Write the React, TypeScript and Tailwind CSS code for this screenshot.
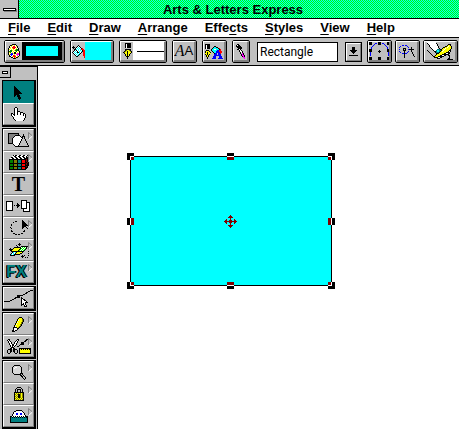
import React, { useState } from 'react';

const COLORS: Record<string, string> = {
  K: '#000000',
  W: '#ffffff',
  G: '#808080',
  S: '#c0c0c0',
  Y: '#ffff00',
  O: '#808000',
  R: '#ff0000',
  D: '#800000',
  B: '#0000ff',
  N: '#008000',
  L: '#00ff00',
  C: '#00ffff',
  T: '#008080',
  M: '#ff00ff',
  P: '#800080',
};

// small bitmap icons, one letter per pixel
function Bitmap({ rows }: { rows: string[] }) {
  const width = Math.max(...rows.map(r => r.length));
  return (
    <svg width={width} height={rows.length} viewBox={`0 0 ${width} ${rows.length}`} shapeRendering="crispEdges" className="shrink-0" aria-hidden="true">
      {rows.map((row, y) =>
        row.split('').map((c, x) => (COLORS[c] ? <rect key={`${x}-${y}`} x={x} y={y} width={1} height={1} fill={COLORS[c]} /> : null))
      )}
    </svg>
  );
}

const paletteRows = [
  '....KKKK....',
  '..KKYWYWK...',
  '.KWYWRRWYK..',
  '.KYWRRRRWK..',
  'KWYWYRRWYWK.',
  'KYWYWYWYNNK.',
  'KWNNYWYNNNK.',
  'KNNNWYWYNWYK',
  'KYNWYWKKWYWK',
  'KWYBBYKKYMMK',
  'KYBBBWYWMMMK',
  '.KWBWRRYWMWK',
  '.KKWYRRRWYK.',
  '...KKWRYKK..',
  '.....KKK....',
];

const bucketRows = [
  '......K......',
  '.K...KWK.....',
  'KKK.KWCWK....',
  '.K.KWCWCWKR..',
  '..KKCWCWCRRR.',
  '..KWKWCWCWKRR',
  '.KWCWKWCWCKRR',
  'KWCWCKKCWK.RR',
  '.KWCWCWCK..RR',
  '..KWCWCK...RR',
  '...KWCK....RR',
  '....KK......R',
  '............R',
];

const nibRows = [
  '..KKKKKK.',
  '..KWKKKK.',
  '..KWKKKK.',
  '..KWKKKK.',
  '..KWKKKK.',
  '..SSSSSS.',
  '..KKKKKK.',
  '..KOYYOK.',
  '.KOYKYYOK',
  'KOYYKYYYK',
  '.KYYKYYK.',
  '..KYKYK..',
  '..KYKYK..',
  '...KKK...',
  '....K....',
  '....K....',
];

const penFillRows = [
  'KKKKK.............',
  'KWKKK.............',
  'KWKKK....KK.......',
  'KWKKK...KCCKK.....',
  'KWKKK..KCCCCCKR...',
  '.SSS..KCCWWCCCKR..',
  '.KKK..KCCCCCBBRR..',
  'KYYYK..KCCCBBBRRR.',
  'KYKYYK..KCCBBBBRR.',
  'YYKYYY...KBB.BBR..',
  'KYKYK....BBB.BBB..',
  '.KYK.....BBBBBBB..',
  '.KYK....BBB...BBB.',
  '..K.....BBB...BBB.',
  '..K....BBBB..BBBBB',
];

const dropperRows = [
  '.KK.......',
  'KWKK......',
  'KKKKK.....',
  '.KKKKK....',
  '..KKKK....',
  '.KKWK.....',
  '...KWK....',
  '...KWWK...',
  '....KWK...',
  '....KSMK..',
  '.....KMK..',
  '.....KMMK.',
  '......KMK.',
  '.......MM.',
  '........M.',
];

const downRows = [
  '...KKK...',
  '...KKK...',
  '...KKK...',
  '.KKKKKKK.',
  '..KKKKK..',
  '...KKK...',
  '....K....',
  '.........',
  'KKKKKKKKK',
];

const arrowRows = [
  'K.........',
  'KK........',
  'KKK.......',
  'KKKK......',
  'KKKKK.....',
  'KKKKKK....',
  'KKKKKKK...',
  'KKKKKKKK..',
  'KKKKK.....',
  'KK.KKK....',
  'K..KKK....',
  '....KKK...',
  '....KKK...',
  '.....K....',
];

const handRows = [
  '....KK.........',
  '...KWWK........',
  '...KWWK........',
  '...KWWK........',
  '...KWWKKK......',
  '...KWWKWWKKK...',
  'KK.KWWKWWKWWKK.',
  'KWKKWWKWWKWWKWK',
  'KWWKWWWWWWWWKWK',
  '.KWWWWWWWWWWWWK',
  '..KWWWWWWWWWWWK',
  '..KWWWWWWWWWWK.',
  '...KWWWWWWWWWK.',
  '....KWWWWWWWK..',
];

const cellsRows = [
  '....KWKKWWKKWWKKWWKK',
  '...WWKKWWKKWWKKWWKSK',
  '..KKWWKKWWKKWWKKWKKK',
  '.WWKKWWKKWWKKWWKKKKK',
  'KKKKKKKKKKKKKKKKKDKK',
  'KNNNKOOOKTTTKRRRKDKK',
  'KNNNKOOOKTTTKRRRKDKK',
  'KNNNKOOOKTTTKRRRKKDK',
  'KKKKKKKKKKKKKKKKKDKK',
  'KNNNKOOOKTTTKRRRKDKK',
  'KNNNKOOOKTTTKRRRKKKK',
  'KKKKKKKKKKKKKKKKKDK.',
  'KNNNKOOOKTTTKRRRKKK.',
  'KNNNKOOOKTTTKRRRKK..',
  'KKKKKKKKKKKKKKKKK...',
];

const scissorRows = [
  '.KK.......KK.......KK...',
  'KWK......KWK......KK....',
  '.KWK....KWK......KK.....',
  '.KWWK..KWWK...KKK.......',
  '..KWK..KWK....KKK.......',
  '..KWWKKWWK...KKKK.......',
  '...KWKKWK...K...........',
  '...KWKWK..KK............',
  '....KKK.................',
  '...KKWKK....KKKKKKKKKKKK',
  '.KKKK.KKKK..KYKYKYKYKYKK',
  'K..KK.KK..K.KYYYYYYYYYYK',
  'K..KK.KK..K.KYYYYYYYYYYK',
  'K..K...K..K.KYYYYYYYYYYK',
  '.KK.....KK..KKKKKKKKKKKK',
];

const pencilRows = [
  '.......KKK...',
  '......KYYYK..',
  '.....KYYYYOK.',
  '.....KWYYYOK.',
  '....KYYYYYOK.',
  '....KWYYYOK..',
  '...KYYYYYOK..',
  '...KWYYYOK...',
  '..KYYYYYOK...',
  '..KWYYYOK....',
  '.KKKKYOK.....',
  '.KWWWKK......',
  '.KWWWK.......',
  'KKWKK........',
  'KKK..........',
];

const lockRows = [
  '...KKKK...',
  '..KSSSSK..',
  '.KSKKKKSK.',
  '.KSK..KSK.',
  '.KSK..KSK.',
  'KKKKKKKKKK',
  'KYOYOYOYOK',
  'KOYOKKOYOK',
  'KYOYKKOYOK',
  'KOYOKKOYOK',
  'KYOYKKOYOK',
  'KOYOYOYOYK',
  'KYOYOYOYOK',
  'KKKKKKKKKK',
];

const maskRows = [
  '......KKKKKK......',
  '....KKWWWWWWK.....',
  '...KWWWWWWWWWK....',
  '...KWWBBWWBBWWK...',
  '..KWWWBBWWBBWWK...',
  '..KWWWWWWWWWWWWK..',
  'KKWKWKWKWKWKWKWKKK',
  'KTKTKTKTKTKTKTKTKK',
  'KTTTTTTTTTTTTTTTTK',
  'KTTTTTTTTTTTTTTTTK',
  'KTTTTTTTTTTTTTTTTK',
  'KTTTTTTTTTTTTTTTTK',
  'KKKKKKKKKKKKKKKKKK',
];

const warpRows = [
  '..........K.........',
  '.........KKK........',
  '.......K..K.........',
  '........K...KKKKKKK.',
  '.....KKKKKKKWLWLWK..',
  '.K..KYYYYYYKLWLWLK..',
  'KKKKYYYYYYKLWLWLK..K',
  '.KKYYYYYYKLWLWLK....',
  '..KKKKKKKKKKKKK....K',
  '...KCWCKYYYYYK......',
  '..KWCWKYYYYKK......K',
  '.KCWCKKKKKK.........',
  '.KKKKK.......K.K...K',
  '............KKK.....',
  '.............K..K.K.',
];

const nodeEditRows = [
  'KKK......KKK......KKK',
  'KKK...BB.KKK.BB...KKK',
  'KKK..B...KKK...B..KKK',
  '....B...........B....',
  '...B.............B...',
  '..B...............B..',
  '..B...............B..',
  'KKK...............KKK',
  'KKK.......K.......KKK',
  'KKK......KKK......KKK',
  '.B........K........B.',
  '.B.................B.',
  '.B.................B.',
  '.B.................B.',
  '.....................',
  'KKK......KKK......KKK',
  'KKK......KKK......KKK',
  'KKK......KKK......KKK',
];

const snapRows = [
  '...BB.BB........',
  '.B......B.......',
  'B........B..K...',
  '....KKK.....K...',
  'B...K.K..BKKKKK.',
  '....KKK.....K...',
  'B....K...B..K...',
  '.B...K..B....K..',
  '...BBKBB.....K..',
  '.....K........K.',
  '.....K........K.',
  '.....K.........K',
  '.....K..........',
];

const drawHandRows = [
  'WWWWWWWWWS.................',
  'KWWWWWWWWK.................',
  '.KWWWWWWWWK..........KKK...',
  '..KWWWWWWWK.........KYYK...',
  '..KWWWWWWWWK......KKYWYYK..',
  '...KWWWWWWWK....KKYYWYYYK..',
  '....KWWWWWWSK..KYYWYYYYYK..',
  '.....KWWWWTTTKKYYWYYYYYK...',
  'K.....KWWTCCTTKYWYYYYYKK...',
  '.K.....KKTCCTKYWYYYYYKWK...',
  '..K.....KTTTKYYYYYYKKKK....',
  '...K.....KKKYYYYYKKWWKK....',
  '....K....KYYYYYKKKKKKK.....',
  '.....K..KYYYYKKWWKK..KK....',
  '......KKYYYKKKKKK.....K....',
  '.......KKKKWWKK.......K....',
  '..........KKK........KK....',
  '....................KKKKKK.',
];

function BarButton({ label, className, children }: { label: string; className: string; children: React.ReactNode }) {
  return (
    <button type="button" aria-label={label} className={`h-[23px] shrink-0 rounded-[2px] border border-black ${className}`}>
      <span className="flex h-full items-center justify-center overflow-hidden border-t border-r-2 border-b-2 border-l border-t-white border-r-[#808080] border-b-[#808080] border-l-white bg-[#c0c0c0]">
        {children}
      </span>
    </button>
  );
}

function ToolButton({ label, active, flyout, children }: { label: string; active?: boolean; flyout?: boolean; children: React.ReactNode }) {
  return (
    <button
      type="button"
      aria-label={label}
      aria-pressed={!!active}
      className={`relative flex h-[22px] w-full items-center justify-center overflow-hidden border-t border-l ${
        active ? 'border-[#008080] bg-[#008080]' : 'border-white border-r border-b border-r-[#808080] border-b-[#808080] bg-[#c0c0c0]'
      }`}
    >
      {children}
      {flyout && (
        <svg width="5" height="8" viewBox="0 0 5 8" className="absolute top-[2px] right-0" aria-hidden="true">
          <path d="M.5 .5V7.5" stroke="#808080" />
          <path d="M.5 .5L4.5 4" stroke="#808080" />
          <path d="M4.5 4L.5 7.5" stroke="#fff" />
        </svg>
      )}
    </button>
  );
}

function ToolGroup({ children }: { children: React.ReactNode }) {
  return <div className="border border-r-2 border-b-2 border-black">{children}</div>;
}

const menus = [
  ['', 'F', 'ile'],
  ['', 'E', 'dit'],
  ['', 'D', 'raw'],
  ['', 'A', 'rrange'],
  ['Effe', 'c', 'ts'],
  ['', 'S', 'tyles'],
  ['', 'V', 'iew'],
  ['', 'H', 'elp'],
];

function Selection() {
  const corner = (x: number, y: number, sx: number, sy: number) => (
    <g key={`${x}-${y}`} transform={`translate(${x} ${y}) scale(${sx} ${sy})`}>
      <rect width="7" height="7" fill="#000" />
      <rect x="3" y="3" width="4" height="4" fill="#fff" />
      <rect x="4" y="4" width="3" height="3" fill="#800000" />
    </g>
  );
  const side = (x: number, y: number, angle: number) => (
    <g key={`${x}-${y}`} transform={`translate(${x} ${y}) rotate(${angle})`}>
      <rect width="7" height="3" fill="#000" />
      <rect y="3" width="7" height="1" fill="#fff" />
      <rect y="4" width="7" height="3" fill="#800000" />
    </g>
  );
  return (
    <svg width="208" height="136" viewBox="0 0 208 136" shapeRendering="crispEdges" className="absolute top-[87px] left-[89px]" role="img" aria-label="Selected rectangle">
      <rect x="3" y="3" width="202" height="130" fill="#000" />
      <rect x="4" y="4" width="200" height="128" fill="#00ffff" />
      {corner(0, 0, 1, 1)}
      {corner(208, 0, -1, 1)}
      {corner(0, 136, 1, -1)}
      {corner(208, 136, -1, -1)}
      {side(100, 0, 0)}
      {side(107, 136, 180)}
      {side(0, 72, -90)}
      {side(208, 65, 90)}
      <path
        fill="#800000"
        d="M103 62h1v13h-1zM97 68h13v1h-13zM102 67h3v3h-3zM102 63h3v1h-3zM101 64h5v1h-5zM102 73h3v1h-3zM101 72h5v1h-5zM98 67h1v3h-1zM99 66h1v5h-1zM108 67h1v3h-1zM107 66h1v5h-1z"
      />
    </svg>
  );
}

export default function App() {
  const [shape, setShape] = useState('Rectangle');
  const [tool, setTool] = useState('Select');

  return (
    <div className="flex min-h-screen flex-col overflow-hidden bg-white font-['Liberation_Sans',Arial,sans-serif] text-black">
      <header className="flex h-[19px] shrink-0 border-b border-black bg-[#00ff00] bg-[conic-gradient(#00ffff_25%,#00ff00_0_50%,#00ffff_0_75%,#00ff00_0)] bg-[length:2px_2px]">
        <button type="button" aria-label="System menu" className="flex w-[19px] shrink-0 items-center justify-center border-r border-black bg-[#c0c0c0]">
          <span className="h-[3px] w-[13px] border border-black bg-white shadow-[1px_1px_0_#808080]" />
        </button>
        <h1 className="flex-1 pr-3 text-center text-[13px] leading-[19px] font-bold">Arts &amp; Letters Express</h1>
      </header>

      <nav className="flex h-[19px] shrink-0 items-center gap-[17px] border-b border-black bg-white px-2">
        {menus.map(([before, key, after]) => (
          <button key={key} type="button" className="text-[13px] leading-4 font-bold">
            {before}
            <span className="underline underline-offset-2">{key}</span>
            {after}
          </button>
        ))}
      </nav>

      <div className="flex h-7 shrink-0 items-center border-b border-black bg-[#c0c0c0] pl-1">
        <div className="flex items-center gap-[5px]">
          <BarButton label="Line colour" className="w-[61px]">
            <span className="flex w-4 shrink-0 justify-center">
              <Bitmap rows={paletteRows} />
            </span>
            <span className="h-full flex-1 border-x-4 border-y-4 border-black bg-[#00ffff]" />
          </BarButton>
          <BarButton label="Fill colour" className="w-11">
            <Bitmap rows={bucketRows} />
            <span className="h-full flex-1 bg-[#00ffff]" />
          </BarButton>
          <BarButton label="Line style" className="w-12">
            <span className="flex w-3 shrink-0 justify-center">
              <Bitmap rows={nibRows} />
            </span>
            <span className="flex h-full flex-1 items-center bg-white pl-1">
              <span className="h-px w-full bg-black" />
            </span>
          </BarButton>
          <BarButton label="Text attributes" className="w-[25px]">
            <span className="font-['Liberation_Serif',serif] text-[16px] leading-4 italic">A</span>
            <span className="text-[13px] leading-4">A</span>
          </BarButton>
          <BarButton label="Pen and fill" className="w-[25px]">
            <Bitmap rows={penFillRows} />
          </BarButton>
          <BarButton label="Pick style" className="w-[18px]">
            <Bitmap rows={dropperRows} />
          </BarButton>
        </div>
        <div className="ml-[7px] flex items-center gap-[7px]">
          <select
            aria-label="Shape"
            value={shape}
            onChange={e => setShape(e.target.value)}
            className="h-5 w-[81px] appearance-none border border-black bg-white pl-[2px] font-['Roboto',sans-serif] text-[12px] leading-4"
          >
            <option>Rectangle</option>
            <option>Ellipse</option>
            <option>Line</option>
          </select>
          <button
            type="button"
            aria-label="Show shapes"
            className="h-5 w-[17px] shrink-0 border border-black"
          >
            <span className="flex h-full items-center justify-center border border-t-white border-r-[#808080] border-b-[#808080] border-l-white bg-[#c0c0c0]">
              <Bitmap rows={downRows} />
            </span>
          </button>
        </div>
        <div className="ml-[5px] flex items-center gap-[3px]">
          <BarButton label="Edit handles" className="w-[25px]">
            <Bitmap rows={nodeEditRows} />
          </BarButton>
          <BarButton label="Snap to point" className="w-[25px]">
            <Bitmap rows={snapRows} />
          </BarButton>
          <BarButton label="Freehand" className="w-[35px]">
            <Bitmap rows={drawHandRows} />
          </BarButton>
        </div>
      </div>

      <div className="flex flex-1">
        <aside className="w-[38px] shrink-0 border-t border-r border-black bg-[#c0c0c0]">
          <div className="mb-[2px] h-[11px]">
            <button type="button" aria-label="Close toolbox" className="flex h-[11px] w-[11px] items-center justify-center border-r border-b border-black bg-[#c0c0c0]">
              <span className="h-[3px] w-[6px] border border-black bg-white" />
            </button>
          </div>
          <div className="flex flex-col gap-px pr-px pl-[2px]" onClick={e => {
            const b = (e.target as HTMLElement).closest('button');
            if (b) setTool(b.getAttribute('aria-label') || 'Select');
          }}>
            <ToolGroup>
              <ToolButton label="Select" active={tool === 'Select'}>
                <Bitmap rows={arrowRows} />
              </ToolButton>
              <ToolButton label="Hand" active={tool === 'Hand'}>
                <Bitmap rows={handRows} />
              </ToolButton>
            </ToolGroup>
            <ToolGroup>
              <ToolButton label="Shapes" flyout active={tool === 'Shapes'}>
                <svg width="21" height="14" viewBox="0 0 21 14" shapeRendering="crispEdges" stroke="#000" aria-hidden="true">
                  <rect x=".5" y=".5" width="10" height="10" fill="#808080" />
                  <circle cx="9.5" cy="8" r="5.5" fill="#fff" />
                  <path d="M15.5 2.5L20.5 13H10.5z" fill="#c0c0c0" />
                </svg>
              </ToolButton>
              <ToolButton label="Symbols" flyout active={tool === 'Symbols'}>
                <Bitmap rows={cellsRows} />
              </ToolButton>
              <ToolButton label="Text" active={tool === 'Text'}>
                <span className="font-['Liberation_Serif',serif] text-[20px] leading-5 font-bold">T</span>
              </ToolButton>
              <ToolButton label="Duplicate" active={tool === 'Duplicate'}>
                <svg width="25" height="12" viewBox="0 0 25 12" shapeRendering="crispEdges" stroke="#000" fill="#fff" aria-hidden="true">
                  <rect x=".5" y="1.5" width="6" height="9" />
                  <path d="M17.5 2.5h6v9h-6z" />
                  <path d="M15.5 .5h5v8h-5z" />
                  <path d="M8 5.5h1M10 5.5h3" />
                  <path d="M11 3v5h1v-1h1v-1h1v-1h-1v-1h-1v-1z" fill="#000" stroke="none" />
                </svg>
              </ToolButton>
              <ToolButton label="Rotate" flyout active={tool === 'Rotate'}>
                <svg width="20" height="16" viewBox="0 0 20 16" shapeRendering="crispEdges" aria-hidden="true">
                  <path d="M8 1A7 7 0 1 0 15.500 10.500" fill="none" stroke="#000" strokeDasharray="2 1" />
                  <path d="M13 0l6 6-2 0 2 3-1 0-2-2-3 2z" fill="#000" />
                </svg>
              </ToolButton>
              <ToolButton label="Warp" flyout active={tool === 'Warp'}>
                <Bitmap rows={warpRows} />
              </ToolButton>
              <ToolButton label="Effects" flyout active={tool === 'Effects'}>
                <span className="pr-1 text-[16px] leading-5 font-bold text-[#008080] [text-shadow:1px_0_#000,-1px_0_#000,-1px_1px_#000]">FX</span>
              </ToolButton>
            </ToolGroup>
            <ToolGroup>
              <ToolButton label="Edit points" active={tool === 'Edit points'}>
                <svg width="29" height="18" viewBox="0 0 29 18" shapeRendering="crispEdges" className="shrink-0" aria-hidden="true">
                  <path d="M0 12.500H5C9 12 12 7 17 6.500S23 1.500 29 1.500" fill="none" stroke="#000" />
                  <path d="M13 6h3v3h-3z" />
                  <path d="M17.500 8.500v8l2-2 1 3 2 0-1-4h2z" fill="#fff" stroke="#000" />
                </svg>
              </ToolButton>
            </ToolGroup>
            <ToolGroup>
              <ToolButton label="Pencil" flyout active={tool === 'Pencil'}>
                <Bitmap rows={pencilRows} />
              </ToolButton>
              <ToolButton label="Cut" flyout active={tool === 'Cut'}>
                <Bitmap rows={scissorRows} />
              </ToolButton>
            </ToolGroup>
            <ToolGroup>
              <ToolButton label="Zoom" flyout active={tool === 'Zoom'}>
                <svg width="16" height="17" viewBox="0 0 16 17" shapeRendering="crispEdges" aria-hidden="true">
                  <circle cx="6" cy="6" r="5" fill="#d8d8d8" stroke="#000" />
                  <path d="M3 5L5.500 3" stroke="#fff" />
                  <path d="M9.500 9.500L14.500 15" stroke="#000" strokeWidth="3" />
                  <path d="M10.500 10.500L14 14.500" stroke="#c0c0c0" />
                </svg>
              </ToolButton>
              <ToolButton label="Lock" flyout active={tool === 'Lock'}>
                <Bitmap rows={lockRows} />
              </ToolButton>
              <ToolButton label="Mask" flyout active={tool === 'Mask'}>
                <Bitmap rows={maskRows} />
              </ToolButton>
            </ToolGroup>
          </div>
        </aside>

        <main className="relative flex-1 bg-white">
          <Selection />
        </main>
      </div>
    </div>
  );
}
